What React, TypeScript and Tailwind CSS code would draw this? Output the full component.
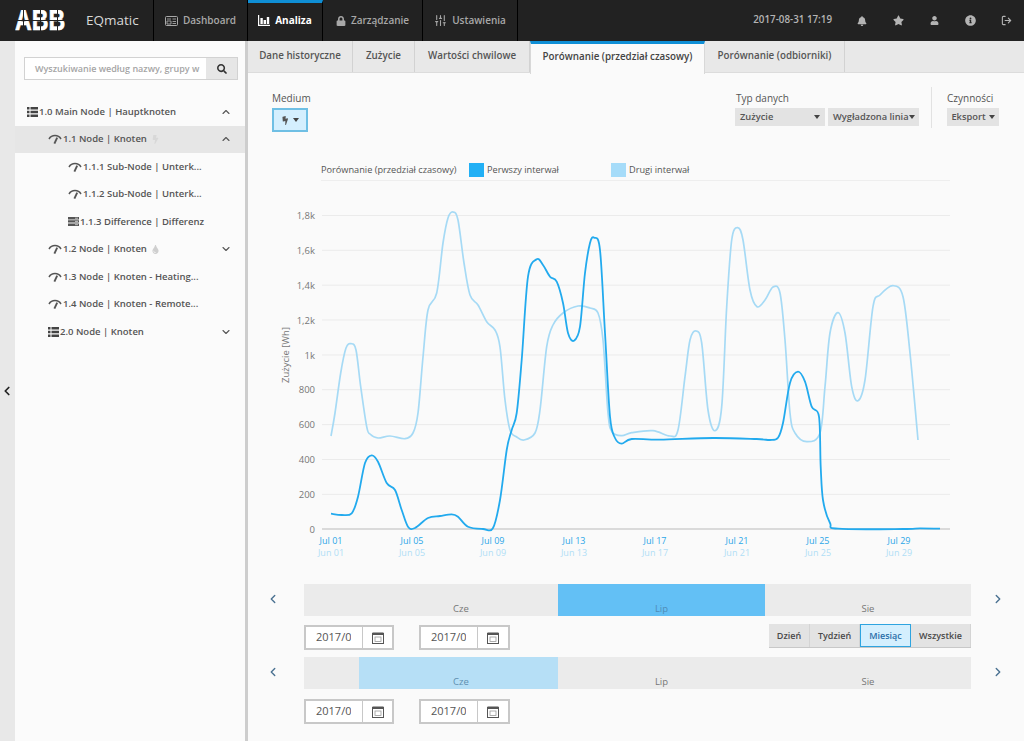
import { ChevronDown, ChevronLeft, ChevronRight, ChevronUp, LogOut, SlidersVertical } from "lucide-react";
import { FaBell, FaBolt, FaInfoCircle, FaLock, FaSearch, FaStar, FaTint, FaUser } from "react-icons/fa";

const lightPts = [
  [331, 436], [335, 413], [340.7, 373], [346, 348], [351, 343.7], [356, 350], [360.7, 386.7], [366.7, 426.7], [370, 434],
  [378, 438], [390, 436], [405, 438.7], [413, 433], [418, 413], [423, 357], [428, 310], [436.7, 293], [443, 243], [448, 218],
  [453, 212], [458, 220], [464, 263], [470, 295], [478, 305], [486.7, 321.7], [495, 330], [500, 347], [505, 400], [510, 430],
  [516.7, 437], [524, 440], [535, 433], [540, 410], [546.7, 346.7], [553, 325], [563, 313], [578, 306], [590, 308], [598, 313],
  [603, 340], [608, 413], [612, 431.7], [621.7, 435.7], [631.7, 432.7], [653, 430.7], [670, 436], [678, 430], [685, 376.7],
  [690, 340], [696, 331], [701.7, 343], [708, 410], [715, 430.7], [721.7, 406.7], [726.7, 306.7], [731.7, 240], [737.7, 227.7],
  [743, 240], [750, 290], [757, 306.7], [765, 300], [773, 287], [780, 293], [785, 340], [790, 413], [795, 433], [806.7, 441.7],
  [820, 433], [825, 386.7], [830, 333], [838, 312.7], [845, 333], [851.7, 386.7], [858, 400.7], [865, 380], [873, 306.7],
  [880, 295], [893, 285.7], [903, 296.7], [910, 353], [918, 440],
];

const darkPts = [
  [331, 513.7], [341.7, 515], [351.7, 513.3], [358, 496.7], [365, 463], [371.7, 455.3], [378, 461.7], [386.7, 483], [395, 490],
  [401.7, 510], [408, 526.7], [415, 528], [428, 518], [440, 516], [451.7, 514.3], [458, 516.7], [468, 526.7], [483, 529],
  [493, 528], [500, 500], [506.7, 450], [511.7, 430], [516.7, 413], [521.7, 360], [528, 276.7], [536.7, 259.3], [543, 265],
  [550, 276.7], [556.7, 281.7], [563, 303], [568, 333], [574, 340.7], [580, 326.7], [585, 273], [590, 243], [594.3, 237.7],
  [600, 250], [605, 333], [610, 416.7], [615, 438], [621.7, 443.7], [631.7, 439], [660, 439.7], [713, 438], [756.7, 439],
  [770, 440], [778, 437.7], [783, 423], [790, 383], [798, 371.7], [805, 381.7], [811.7, 406.7], [819, 416.7], [820.7, 466.7],
  [823, 500], [830, 523], [838, 528.7], [903, 529], [920, 528.3], [940, 528.7],
];

// catmull-rom through the read-off points
function smooth(pts: number[][]) {
  let d = `M${pts[0][0]} ${pts[0][1]}`;
  for (let i = 0; i < pts.length - 1; i++) {
    const p0 = pts[Math.max(i - 1, 0)];
    const p1 = pts[i];
    const p2 = pts[i + 1];
    const p3 = pts[Math.min(i + 2, pts.length - 1)];
    const c1x = p1[0] + (p2[0] - p0[0]) / 6;
    const c1y = p1[1] + (p2[1] - p0[1]) / 6;
    const c2x = p2[0] - (p3[0] - p1[0]) / 6;
    const c2y = p2[1] - (p3[1] - p1[1]) / 6;
    d += ` C${c1x.toFixed(1)} ${c1y.toFixed(1)} ${c2x.toFixed(1)} ${c2y.toFixed(1)} ${p2[0]} ${p2[1]}`;
  }
  return d;
}

const yTicks = [
  ["1,8k", 215.5], ["1,6k", 250.3], ["1,4k", 285.2], ["1,2k", 320], ["1k", 355], ["800", 389.7], ["600", 424.6], ["400", 459.5], ["200", 494.4],
] as const;

const xTicks = [
  ["01", 331], ["05", 412], ["09", 493], ["13", 574], ["17", 655], ["21", 737], ["25", 818], ["29", 899],
] as const;

function Caret() {
  return <span className="inline-block w-0 h-0 border-x-[3.5px] border-x-transparent border-t-[4px] border-t-[#444]" />;
}

function Gauge() {
  return (
    <svg width="14" height="10" viewBox="0 0 14 10" className="shrink-0">
      <path d="M1 5 A7 7 0 0 1 13 5" fill="none" stroke="#555" strokeWidth="1.5" />
      <path d="M9.2 3.6 L6.4 9.6" stroke="#555" strokeWidth="1.9" />
    </svg>
  );
}

function ListIcon() {
  return (
    <svg width="11" height="10" viewBox="0 0 11 10" className="shrink-0">
      <path d="M0 0h2.5v2.5H0zM3.5 0H11v2.5H3.5zM0 3.7h2.5v2.5H0zM3.5 3.7H11v2.5H3.5zM0 7.4h2.5v2.5H0zM3.5 7.4H11v2.5H3.5z" fill="#444" />
    </svg>
  );
}

function DiffIcon() {
  return (
    <svg width="11" height="9" viewBox="0 0 11 9" className="shrink-0">
      <path d="M0 0h11v2.4H0zM0 3.2h11v2.4H0zM0 6.4h11v2.6H0z" fill="#555" />
      <path d="M7 1.2h3M7 4.4h3M7 7.7h3" stroke="#ddd" strokeWidth="0.8" />
    </svg>
  );
}

function CalendarIcon() {
  return (
    <svg width="12" height="12" viewBox="0 0 12 12">
      <rect x="0.5" y="1.5" width="11" height="10" fill="none" stroke="#555" />
      <rect x="0.5" y="0.5" width="11" height="2.5" fill="#555" />
      <rect x="3" y="5" width="6" height="4.5" fill="none" stroke="#999" strokeWidth="0.8" />
    </svg>
  );
}

function NavItem({ label, icon, active, w }: { label: string; icon: React.ReactNode; active?: boolean; w: string }) {
  return (
    <div className={`h-full flex items-center justify-center gap-[5px] border-r border-black shrink-0 ${w} ${active ? "border-t-[3px] border-t-[#0f8fd6] pb-[3px] text-white font-bold" : "text-[#a8a8a8] font-semibold"}`}>
      {icon}
      <span className="text-[10px]">{label}</span>
    </div>
  );
}

function TreeRow({ indent, icon, label, after, chevron, active }: { indent: string; icon: React.ReactNode; label: string; after?: React.ReactNode; chevron?: "up" | "down"; active?: boolean }) {
  return (
    <div className={`h-[27.5px] flex items-center pr-[13px] ${indent} ${active ? "bg-[#e6e6e6]" : ""}`}>
      {icon}
      <span className="ml-[1px] text-[9.5px] font-semibold text-[#555] whitespace-nowrap">{label}</span>
      {after}
      {chevron === "up" && <ChevronUp size={12} strokeWidth={2.2} className="ml-auto text-[#555]" />}
      {chevron === "down" && <ChevronDown size={12} strokeWidth={2.2} className="ml-auto text-[#555]" />}
    </div>
  );
}

function Tab({ label, active, w }: { label: string; active?: boolean; w: string }) {
  return (
    <div className={`flex items-center justify-center text-[9.8px] font-semibold shrink-0 ${w} ${active ? "h-[33px] bg-[#fafafa] border-t-[3px] border-t-[#0f8fd6] text-[#444] pb-[3px] border-x border-x-[#d8d8d8]" : "h-[31px] text-[#555] border-r border-r-[#d2d2d2]"}`}>
      {label}
    </div>
  );
}

function DateBox({ value, w }: { value: string; w: string }) {
  return (
    <div className={`h-[25px] flex border-2 border-[#c8c8c8] bg-white ${w}`}>
      <div className="w-[57px] pl-[10px] flex items-center text-[11px] text-[#555] border-r border-r-[#c8c8c8]">
        <span className="block w-[35px] overflow-hidden whitespace-nowrap">{value}</span>
      </div>
      <div className="flex-1 flex items-center justify-center">
        <CalendarIcon />
      </div>
    </div>
  );
}

function SegButton({ label, w, active }: { label: string; w: string; active?: boolean }) {
  return (
    <div className={`${w} flex items-center justify-center text-[9px] font-semibold ${active ? "bg-[#d4effe] border border-[#2ea4e0] text-[#2a6ea8]" : "text-[#4a4a4a] border-r border-r-[#d4d4d4]"}`}>
      {label}
    </div>
  );
}

export default function App() {
  return (
    <div className="w-[1024px] h-[741px] flex flex-col overflow-hidden bg-[#fafafa] font-['Open_Sans',sans-serif]">
      {/* top bar */}
      <div className="h-[41px] shrink-0 bg-[#222222] flex items-center">
        <div className="w-[86px] h-full flex items-center pl-[15px] shrink-0">
          <div className="relative w-[51px] h-[21px] overflow-hidden">
            <span className="block origin-top-left scale-x-[0.8] text-[29px] leading-[21px] font-bold font-['Liberation_Sans',sans-serif] text-white [-webkit-text-stroke:0.6px_white]">ABB</span>
            <span className="absolute left-0 right-0 top-[10px] h-px bg-[#222222]" />
            <span className="absolute top-0 bottom-0 left-[8px] w-px bg-[#222222]" />
            <span className="absolute top-0 bottom-0 left-[25px] w-px bg-[#222222]" />
            <span className="absolute top-0 bottom-0 left-[42px] w-px bg-[#222222]" />
          </div>
        </div>
        <div className="w-[68px] h-full flex items-center text-[13.5px] text-[#d8d8d8] border-r border-black shrink-0">EQmatic</div>
        <NavItem
          w="w-[94px]"
          label="Dashboard"
          icon={
            <svg width="13" height="10" viewBox="0 0 13 10">
              <rect x="0.5" y="0.5" width="12" height="9" rx="1" fill="none" stroke="#a8a8a8" />
              <path d="M2 3h4M7.5 3h3.5M2 5h4v3H2zM7.5 5.5H11M7.5 7.5H11" stroke="#a8a8a8" fill="none" strokeWidth="0.9" />
            </svg>
          }
        />
        <NavItem
          w="w-[75px]"
          active
          label="Analiza"
          icon={
            <svg width="12" height="11" viewBox="0 0 12 11">
              <path d="M0 0h1.2v9.8H12V11H0zM2.4 3h2.4v6H2.4zM5.6 5h2.4v4H5.6zM8.8 2h2.4v7H8.8z" fill="#fff" />
            </svg>
          }
        />
        <NavItem w="w-[100px]" label="Zarządzanie" icon={<FaLock size={10} />} />
        <NavItem w="w-[95px]" label="Ustawienia" icon={<SlidersVertical size={13} strokeWidth={2} />} />
        <div className="ml-auto flex items-center text-[#b4b4b4]">
          <span className="text-[9.8px] font-semibold mr-[12px]">2017-08-31 17:19</span>
          <span className="w-[36px] flex justify-center"><FaBell size={10} /></span>
          <span className="w-[36px] flex justify-center"><FaStar size={11} /></span>
          <span className="w-[36px] flex justify-center"><FaUser size={9} /></span>
          <span className="w-[36px] flex justify-center"><FaInfoCircle size={11} /></span>
          <span className="w-[36px] flex justify-center"><LogOut size={11} strokeWidth={2.4} /></span>
        </div>
      </div>

      <div className="flex-1 flex min-h-0">
        {/* sidebar */}
        <div className="w-[15px] shrink-0 bg-[#e8e8e8] flex items-center justify-center">
          <ChevronLeft size={14} strokeWidth={3} className="text-[#222] -ml-px" />
        </div>
        <div className="w-[233px] shrink-0 bg-[#fbfbfb] border-r-[3px] border-r-[#cdcdcd]">
          <div className="mt-[16px] ml-[9px] w-[214px] h-[23px] flex border border-[#d2d2d2]">
            <div className="flex-1 bg-white pl-[10px] flex items-center text-[9px] font-semibold text-[#a5a5a5] overflow-hidden whitespace-nowrap">
              Wyszukiwanie według nazwy, grupy w
            </div>
            <div className="w-[31px] bg-[#e6e6e6] flex items-center justify-center">
              <FaSearch size={10} className="text-[#333]" />
            </div>
          </div>
          <div className="mt-[18px]">
            <TreeRow indent="pl-[12px]" icon={<ListIcon />} label="1.0 Main Node | Hauptknoten" chevron="up" />
            <TreeRow indent="pl-[33px]" icon={<Gauge />} label="1.1 Node | Knoten" active chevron="up" after={<FaBolt size={9} className="ml-[4px] text-[#d8d8d8]" />} />
            <TreeRow indent="pl-[53px]" icon={<Gauge />} label="1.1.1 Sub-Node | Unterk..." />
            <TreeRow indent="pl-[53px]" icon={<Gauge />} label="1.1.2 Sub-Node | Unterk..." />
            <TreeRow indent="pl-[53px]" icon={<DiffIcon />} label="1.1.3 Difference | Differenz" />
            <TreeRow indent="pl-[33px]" icon={<Gauge />} label="1.2 Node | Knoten" chevron="down" after={<FaTint size={9} className="ml-[4px] text-[#cfcfcf]" />} />
            <TreeRow indent="pl-[33px]" icon={<Gauge />} label="1.3 Node | Knoten - Heating..." />
            <TreeRow indent="pl-[33px]" icon={<Gauge />} label="1.4 Node | Knoten - Remote..." />
            <TreeRow indent="pl-[33px]" icon={<ListIcon />} label="2.0 Node | Knoten" chevron="down" />
          </div>
        </div>

        {/* main */}
        <div className="flex-1 min-w-0 flex flex-col">
          <div className="h-[32px] shrink-0 bg-[#e8e8e8] border-b border-b-[#dcdcdc] flex items-start">
            <Tab w="w-[105px]" label="Dane historyczne" />
            <Tab w="w-[62px]" label="Zużycie" />
            <Tab w="w-[115px]" label="Wartości chwilowe" />
            <Tab w="w-[175px]" active label="Porównanie (przedział czasowy)" />
            <Tab w="w-[140px]" label="Porównanie (odbiorniki)" />
          </div>

          {/* toolbar */}
          <div className="h-[87px] shrink-0 flex pt-[18px] pl-[24px] pr-[25px] text-[10px] text-[#555]">
            <div>
              <div className="h-[15px] leading-[15px]">Medium</div>
              <div className="mt-[2px] w-[36px] h-[24px] bg-[#d4effe] border-2 border-[#6fbfe4] flex items-center justify-center gap-[3px]">
                <FaBolt size={9} className="text-[#555] -rotate-12" />
                <Caret />
              </div>
            </div>
            <div className="ml-auto">
              <div className="h-[15px] leading-[15px] pl-px">Typ danych</div>
              <div className="mt-[2px] flex gap-[3px] font-semibold text-[9.3px] text-[#555]">
                <div className="w-[90px] h-[18px] bg-[#e3e3e3] flex items-center justify-between px-[5px]">Zużycie<Caret /></div>
                <div className="w-[91px] h-[18px] bg-[#e3e3e3] flex items-center justify-between px-[5px] whitespace-nowrap">Wygładzona linia<Caret /></div>
              </div>
            </div>
            <div className="ml-[12px] mr-[15px] w-px h-[41px] -mt-[4px] bg-[#e2e2e2]" />
            <div>
              <div className="h-[15px] leading-[15px]">Czynności</div>
              <div className="mt-[2px] w-[52px] h-[18px] bg-[#e3e3e3] flex items-center justify-center gap-[3px] font-semibold text-[9.3px]">Eksport<Caret /></div>
            </div>
          </div>

          {/* legend */}
          <div className="h-[21px] shrink-0 ml-[73px] mr-[74px] border-b border-b-[#eeeeee] flex items-center text-[9.2px] text-[#555]">
            <span className="w-[148px]">Porównanie (przedział czasowy)</span>
            <span className="w-[15px] h-[14px] bg-[#22b0f5]" />
            <span className="ml-[3px] w-[124px]">Perwszy interwał</span>
            <span className="w-[15px] h-[14px] bg-[#a6dcf9]" />
            <span className="ml-[3px]">Drugi interwał</span>
          </div>

          {/* chart */}
          <svg width="776" height="370" viewBox="248 200 776 370" className="mt-[19px] shrink-0" fontFamily="'Open Sans', sans-serif" fontSize="9.5">
            {yTicks.map(([label, y]) => (
              <g key={label}>
                <line x1="322" x2="950" y1={y} y2={y} stroke="#ebebeb" strokeWidth="1" />
                <text x="315" y={y + 3.5} textAnchor="end" fill="#777">{label}</text>
              </g>
            ))}
            <line x1="322" x2="950" y1="529" y2="529" stroke="#cfcfcf" strokeWidth="1.5" />
            <text x="315" y="532.5" textAnchor="end" fill="#777">0</text>
            <text transform="translate(289 355) rotate(-90)" textAnchor="middle" fill="#777">Zużycie [Wh]</text>
            {xTicks.map(([day, x]) => (
              <g key={day} textAnchor="middle" fontSize="9">
                <text x={x} y="544" fill="#2aa6e8">Jul {day}</text>
                <text x={x} y="556" fill="#b0def6">Jun {day}</text>
              </g>
            ))}
            <path d={smooth(lightPts)} fill="none" stroke="#a6daf5" strokeWidth="1.7" />
            <path d={smooth(darkPts)} fill="none" stroke="#22aaee" strokeWidth="1.8" />
          </svg>

          {/* first range */}
          <div className="mt-[14px] flex items-center shrink-0">
            <div className="w-[56px] flex justify-center pr-[6px] -mt-[3px]"><ChevronLeft size={14} strokeWidth={2.4} className="text-[#4a7191]" /></div>
            <div className="w-[667px] h-[32px] flex text-[9.5px] text-[#777]">
              <div className="w-[254px] bg-[#ebebeb] pl-[60px] flex items-end justify-center">Cze</div>
              <div className="w-[207px] bg-[#63c0f5] flex items-end justify-center text-[#4f8cb5]">Lip</div>
              <div className="w-[206px] bg-[#ebebeb] flex items-end justify-center">Sie</div>
            </div>
            <div className="flex-1 flex justify-center -mt-[3px]"><ChevronRight size={14} strokeWidth={2.4} className="text-[#4a7191]" /></div>
          </div>
          <div className="mt-[8px] ml-[56px] w-[667px] h-[25px] flex shrink-0">
            <div className="mt-px"><DateBox w="w-[90px]" value="2017/07/01" /></div>
            <div className="mt-px ml-[25px]"><DateBox w="w-[91px]" value="2017/07/31" /></div>
            <div className="ml-auto h-[24px] w-[202px] bg-[#e3e3e3] border-b border-b-[#c8c8c8] flex">
              <SegButton w="w-[41px]" label="Dzień" />
              <SegButton w="w-[50px]" label="Tydzień" />
              <SegButton w="w-[51px]" active label="Miesiąc" />
              <SegButton w="w-[60px]" label="Wszystkie" />
            </div>
          </div>

          {/* second range */}
          <div className="mt-[8px] flex items-center shrink-0">
            <div className="w-[56px] flex justify-center pr-[6px] -mt-[3px]"><ChevronLeft size={14} strokeWidth={2.4} className="text-[#4a7191]" /></div>
            <div className="w-[667px] h-[32px] flex text-[9.5px] text-[#777]">
              <div className="w-[55px] bg-[#ebebeb]" />
              <div className="w-[199px] bg-[#b6dff6] pl-[5px] flex items-end justify-center text-[#5f8fb0]">Cze</div>
              <div className="w-[207px] bg-[#ebebeb] flex items-end justify-center">Lip</div>
              <div className="w-[206px] bg-[#ebebeb] flex items-end justify-center">Sie</div>
            </div>
            <div className="flex-1 flex justify-center -mt-[3px]"><ChevronRight size={14} strokeWidth={2.4} className="text-[#4a7191]" /></div>
          </div>
          <div className="mt-[10px] ml-[56px] flex shrink-0">
            <DateBox w="w-[90px]" value="2017/06/01" />
            <div className="ml-[25px]"><DateBox w="w-[91px]" value="2017/06/30" /></div>
          </div>
        </div>
      </div>
    </div>
  );
}
